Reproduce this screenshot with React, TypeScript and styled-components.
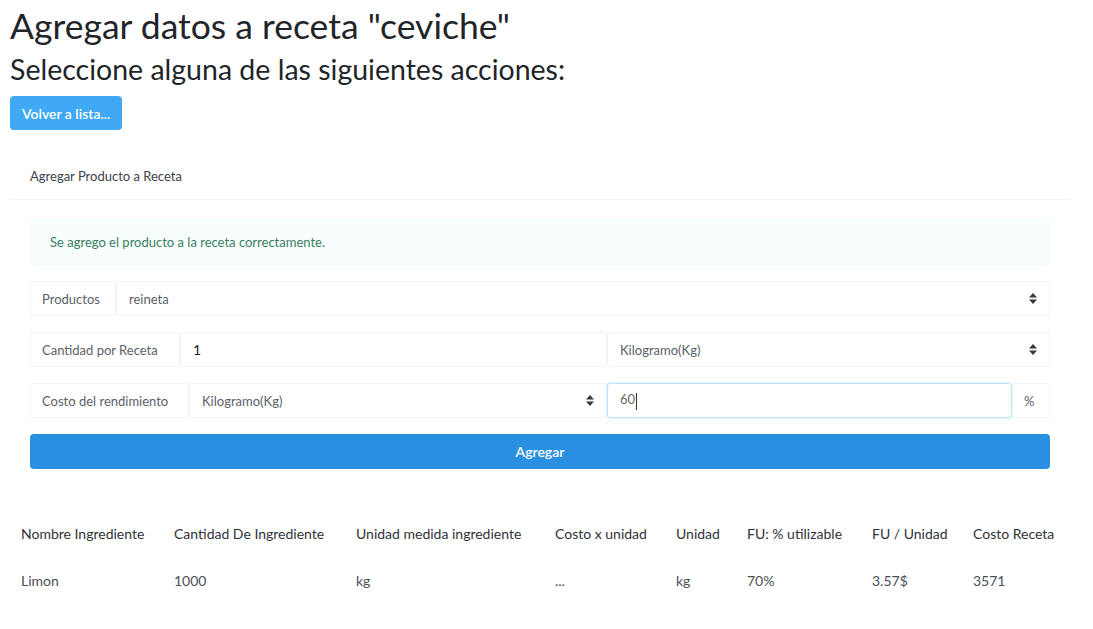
import React from "react";
import styled, { createGlobalStyle } from "styled-components";

const GlobalStyle = createGlobalStyle`
  body {
    margin: 0;
    background: #ffffff;
    font-family: Lato, "Noto Sans", sans-serif;
    color: #212529;
  }
  * { box-sizing: border-box; }
`;

const Page = styled.main`
  padding: 0 10px;
`;

const Title = styled.h1`
  font-size: 35.5px;
  font-weight: 400;
  margin: 0;
  padding-top: 4px;
  line-height: 44px;
  color: #212529;
`;

const Subtitle = styled.h2`
  font-size: 28.5px;
  font-weight: 400;
  margin: 4px 0 10px;
  line-height: 34px;
  color: #212529;
`;

const BackButton = styled.button`
  background: #3fa9f5;
  color: #fff;
  border: none;
  border-radius: 4px;
  height: 34px;
  padding: 0 12px;
  font-family: inherit;
  font-size: 14px;
  font-weight: 600;
`;

const Card = styled.section`
  margin-top: 22px;
  width: 1060px;
`;

const CardHeader = styled.div`
  padding: 16px 20px 15px;
  font-size: 13px;
  color: #3d4248;
  border-bottom: 1px solid #f3f4f5;
`;

const CardBody = styled.div`
  padding: 19px 20px 0;
  display: flex;
  flex-direction: column;
  gap: 16px;
`;

const Alert = styled.div`
  background: #f7fefd;
  border: 1px solid #f0faf9;
  border-radius: 3px;
  color: #3c7d63;
  font-size: 13px;
  padding: 14px 19px;
  height: 46px;
`;

const Group = styled.div`
  display: flex;
  height: 35px;
  width: 1020px;
`;

const Addon = styled.span<{ $w: number }>`
  flex: 0 0 ${(p) => p.$w}px;
  display: flex;
  align-items: center;
  padding: 0 11px;
  font-size: 13px;
  color: #5b6169;
  border: 1px solid #eef5fa;
  border-radius: 3px;
`;

const Field = styled.div<{ $w?: number; $focus?: boolean }>`
  flex: ${(p) => (p.$w ? `0 0 ${p.$w}px` : "1 1 auto")};
  display: flex;
  align-items: center;
  justify-content: space-between;
  padding: 0 12px;
  font-size: 13px;
  color: ${(p) => (p.$focus ? "#6f6a5c" : "#5b6169")};
  border: 1px solid ${(p) => (p.$focus ? "#bfe6f8" : "#eef5fa")};
  box-shadow: ${(p) => (p.$focus ? "0 0 0 1px #e2f4fc" : "none")};
  border-radius: 3px;
`;

const Value = styled.span<{ $dark?: boolean }>`
  color: ${(p) => (p.$dark ? "#212529" : "inherit")};
  font-size: ${(p) => (p.$dark ? "14px" : "13px")};
`;

const Caret = styled.span`
  display: inline-block;
  width: 1px;
  height: 17px;
  background: #333;
  vertical-align: middle;
  margin-left: 1px;
`;

const Arrows = () => (
  <svg width="8" height="11" viewBox="0 0 8 11">
    <path d="M4 0 L8 4.5 H0 Z M0 6.5 H8 L4 11 Z" fill="#343a40" />
  </svg>
);

const SubmitButton = styled.button`
  width: 1020px;
  height: 35px;
  border: none;
  border-radius: 4px;
  background: #2990e1;
  color: #fff;
  font-family: inherit;
  font-size: 14px;
  font-weight: 600;
`;

const Table = styled.table`
  margin-top: 44px;
  border-collapse: collapse;
  font-size: 14px;
  color: #2f3338;
`;

const Th = styled.th<{ $w?: number }>`
  text-align: left;
  font-weight: 400;
  padding: 12px 11px 15px;
  width: ${(p) => (p.$w ? `${p.$w}px` : "auto")};
  white-space: nowrap;
`;

const Td = styled.td`
  padding: 15px 11px 12px;
  color: #4a4f55;
  white-space: nowrap;
`;

const columns: [string, number][] = [
  ["Nombre Ingrediente", 153],
  ["Cantidad De Ingrediente", 182],
  ["Unidad medida ingrediente", 199],
  ["Costo x unidad", 121],
  ["Unidad", 71],
  ["FU: % utilizable", 125],
  ["FU / Unidad", 101],
  ["Costo Receta", 110],
];

const row = ["Limon", "1000", "kg", "...", "kg", "70%", "3.57$", "3571"];

export default function App() {
  return (
    <Page>
      <GlobalStyle />
      <Title>Agregar datos a receta "ceviche"</Title>
      <Subtitle>Seleccione alguna de las siguientes acciones:</Subtitle>
      <BackButton>Volver a lista...</BackButton>
      <Card>
        <CardHeader>Agregar Producto a Receta</CardHeader>
        <CardBody>
          <Alert>Se agrego el producto a la receta correctamente.</Alert>
          <Group>
            <Addon $w={86}>Productos</Addon>
            <Field>
              <Value>reineta</Value>
              <Arrows />
            </Field>
          </Group>
          <Group>
            <Addon $w={150}>Cantidad por Receta</Addon>
            <Field $w={427}>
              <Value $dark>1</Value>
            </Field>
            <Field>
              <Value>Kilogramo(Kg)</Value>
              <Arrows />
            </Field>
          </Group>
          <Group>
            <Addon $w={159}>Costo del rendimiento</Addon>
            <Field $w={418}>
              <Value>Kilogramo(Kg)</Value>
              <Arrows />
            </Field>
            <Field $focus>
              <Value>
                60
                <Caret />
              </Value>
            </Field>
            <Addon $w={38}>%</Addon>
          </Group>
          <SubmitButton>Agregar</SubmitButton>
        </CardBody>
      </Card>
      <Table>
        <thead>
          <tr>
            {columns.map(([c, w]) => (
              <Th key={c} $w={w}>
                {c}
              </Th>
            ))}
          </tr>
        </thead>
        <tbody>
          <tr>
            {row.map((v, i) => (
              <Td key={i}>{v}</Td>
            ))}
          </tr>
        </tbody>
      </Table>
    </Page>
  );
}
